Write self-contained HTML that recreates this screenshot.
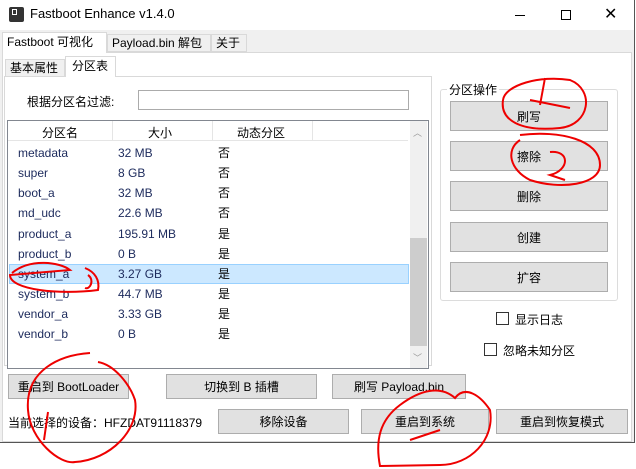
<!DOCTYPE html>
<html><head><meta charset="utf-8"><style>
*{margin:0;padding:0;box-sizing:border-box}
body{width:636px;height:469px;background:#fff;position:relative;overflow:hidden;font-family:"Liberation Sans","Noto Sans CJK SC",sans-serif;font-size:12px;color:#000}
.a{position:absolute}
.btn{position:absolute;background:#e1e1e1;border:1px solid #adadad;text-align:center;font-size:12px;display:flex;align-items:center;justify-content:center}
.tab{position:absolute;border:1px solid #d9d9d9;background:#f0f0f0;font-size:12px;padding-left:4px;line-height:18px}
.r{position:absolute;left:9px;width:399px;height:20px;line-height:20px;font-size:12px}
.r span{position:absolute}
.r .n{left:9px;color:#1c2a5c}.r .s{left:124px;color:#1c2a5c}.r .d{left:209px}
.cb{position:absolute;width:13px;height:13px;border:1px solid #333;background:#fff}
</style></head><body>
<div class="a" style="left:0;top:0;width:635px;height:443px;background:#f0f0f0;border-right:1px solid #555;border-bottom:1px solid #555"></div>
<div class="a" style="left:0;top:0;width:634px;height:30px;background:#fff"></div>
<div class="a" style="left:9px;top:7px;width:15px;height:15px;background:#333;border-radius:2px"></div>
<div class="a" style="left:12px;top:9px;width:5px;height:6px;border:1px solid #fff"></div>
<div class="a" style="left:30px;top:6px;font-size:13px">Fastboot Enhance v1.4.0</div>
<div class="a" style="left:515px;top:15px;width:10px;height:1px;background:#000"></div>
<div class="a" style="left:561px;top:10px;width:10px;height:10px;border:1px solid #000"></div>
<div class="a" style="left:604px;top:4px;font-size:16px">✕</div>
<div class="a" style="left:2px;top:52px;width:630px;height:390px;background:#fff;border:1px solid #d9d9d9"></div>
<div class="tab" style="left:2px;top:32px;width:105px;height:21px;background:#fff;border-bottom:none">Fastboot 可视化</div>
<div class="tab" style="left:107px;top:34px;width:104px;height:18px;line-height:16px">Payload.bin 解包</div>
<div class="tab" style="left:211px;top:34px;width:36px;height:18px;line-height:16px">关于</div>
<div class="a" style="left:4px;top:76px;width:428px;height:290px;background:#fff;border:1px solid #d9d9d9"></div>
<div class="tab" style="left:5px;top:59px;width:60px;height:18px;line-height:16px">基本属性</div>
<div class="tab" style="left:65px;top:56px;width:51px;height:21px;background:#fff;border-bottom:none;padding-left:6px">分区表</div>
<div class="a" style="left:27px;top:93px">根据分区名过滤:</div>
<div class="a" style="left:138px;top:90px;width:271px;height:20px;border:1px solid #ababab;background:#fff"></div>
<div class="a" style="left:7px;top:120px;width:422px;height:249px;border:1px solid #828790;background:#fff"></div>
<div class="a" style="left:8px;top:121px;width:400px;height:20px;border-bottom:1px solid #e5e5e5"></div>
<div class="a" style="left:112px;top:121px;width:1px;height:20px;background:#e5e5e5"></div>
<div class="a" style="left:212px;top:121px;width:1px;height:20px;background:#e5e5e5"></div>
<div class="a" style="left:312px;top:121px;width:1px;height:20px;background:#e5e5e5"></div>
<div class="a" style="left:42px;top:124px">分区名</div>
<div class="a" style="left:148px;top:124px">大小</div>
<div class="a" style="left:237px;top:124px">动态分区</div>
<div class="a" style="left:410px;top:121px;width:17px;height:247px;background:#f0f0f0"></div>
<div class="a" style="left:410px;top:238px;width:17px;height:108px;background:#cdcdcd"></div>
<div class="a" style="left:413px;top:126px;font-size:9px;color:#999">︿</div>
<div class="a" style="left:413px;top:351px;font-size:9px;color:#999">﹀</div>
<div class="a" style="left:9px;top:264px;width:400px;height:20px;background:#cce8ff;border:1px solid #99d1ff"></div>
<div class="r" style="top:143px"><span class="n">metadata</span><span class="s" style="left:109px">32 MB</span><span class="d">否</span></div>
<div class="r" style="top:163px"><span class="n">super</span><span class="s" style="left:109px">8 GB</span><span class="d">否</span></div>
<div class="r" style="top:183px"><span class="n">boot_a</span><span class="s" style="left:109px">32 MB</span><span class="d">否</span></div>
<div class="r" style="top:203px"><span class="n">md_udc</span><span class="s" style="left:109px">22.6 MB</span><span class="d">否</span></div>
<div class="r" style="top:224px"><span class="n">product_a</span><span class="s" style="left:109px">195.91 MB</span><span class="d">是</span></div>
<div class="r" style="top:244px"><span class="n">product_b</span><span class="s" style="left:109px">0 B</span><span class="d">是</span></div>
<div class="r" style="top:264px"><span class="n">system_a</span><span class="s" style="left:109px">3.27 GB</span><span class="d">是</span></div>
<div class="r" style="top:284px"><span class="n">system_b</span><span class="s" style="left:109px">44.7 MB</span><span class="d">是</span></div>
<div class="r" style="top:304px"><span class="n">vendor_a</span><span class="s" style="left:109px">3.33 GB</span><span class="d">是</span></div>
<div class="r" style="top:324px"><span class="n">vendor_b</span><span class="s" style="left:109px">0 B</span><span class="d">是</span></div>
<div class="a" style="left:440px;top:89px;width:178px;height:212px;border:1px solid #dcdcdc;border-radius:3px"></div>
<div class="a" style="left:447px;top:81px;background:#fff;padding:0 2px">分区操作</div>
<div class="btn" style="left:450px;top:101px;width:158px;height:30px">刷写</div>
<div class="btn" style="left:450px;top:141px;width:158px;height:30px">擦除</div>
<div class="btn" style="left:450px;top:181px;width:158px;height:30px">删除</div>
<div class="btn" style="left:450px;top:222px;width:158px;height:30px">创建</div>
<div class="btn" style="left:450px;top:262px;width:158px;height:30px">扩容</div>
<div class="cb" style="left:496px;top:312px"></div><div class="a" style="left:515px;top:311px">显示日志</div>
<div class="cb" style="left:484px;top:343px"></div><div class="a" style="left:503px;top:342px">忽略未知分区</div>
<div class="btn" style="left:8px;top:374px;width:121px;height:25px">重启到 BootLoader</div>
<div class="btn" style="left:166px;top:374px;width:151px;height:25px">切换到 B 插槽</div>
<div class="btn" style="left:332px;top:374px;width:134px;height:25px">刷写 Payload.bin</div>
<div class="a" style="left:8px;top:414px">当前选择的设备：HFZDAT91118379</div>
<div class="btn" style="left:218px;top:409px;width:131px;height:25px">移除设备</div>
<div class="btn" style="left:361px;top:409px;width:128px;height:25px">重启到系统</div>
<div class="btn" style="left:496px;top:409px;width:132px;height:25px">重启到恢复模式</div>
<svg class="a" style="left:0;top:0" width="636" height="469" fill="none" stroke="#e00" stroke-width="2">
<path d="M503 100 C505 85,540 75,570 80 C595 90,590 125,560 128 C520 132,500 120,503 100 M545 78 L540 105 M530 100 L570 108 M520 135 C560 130,600 140,600 165 C600 185,560 190,530 180 C510 170,505 150,520 140 M550 152 C570 150,570 170,550 175 L565 180"/>
<path d="M12 273 C30 258,60 262,70 270 L10 275 C10 290,60 295,98 290 C100 280,95 272,85 268 M88 275 C95 280,90 290,85 288"/>
<path d="M90 353 C60 355,25 370,28 410 C30 440,60 465,75 462 C110 460,140 430,135 400 C130 385,115 365,98 362 M48 412 L44 440"/>
<path d="M400 405 C420 390,440 385,455 398 C465 385,480 395,490 410 C495 440,470 465,440 465 L380 466 C375 440,380 420,400 405 M410 440 L440 430"/>
</svg>
</body></html>
